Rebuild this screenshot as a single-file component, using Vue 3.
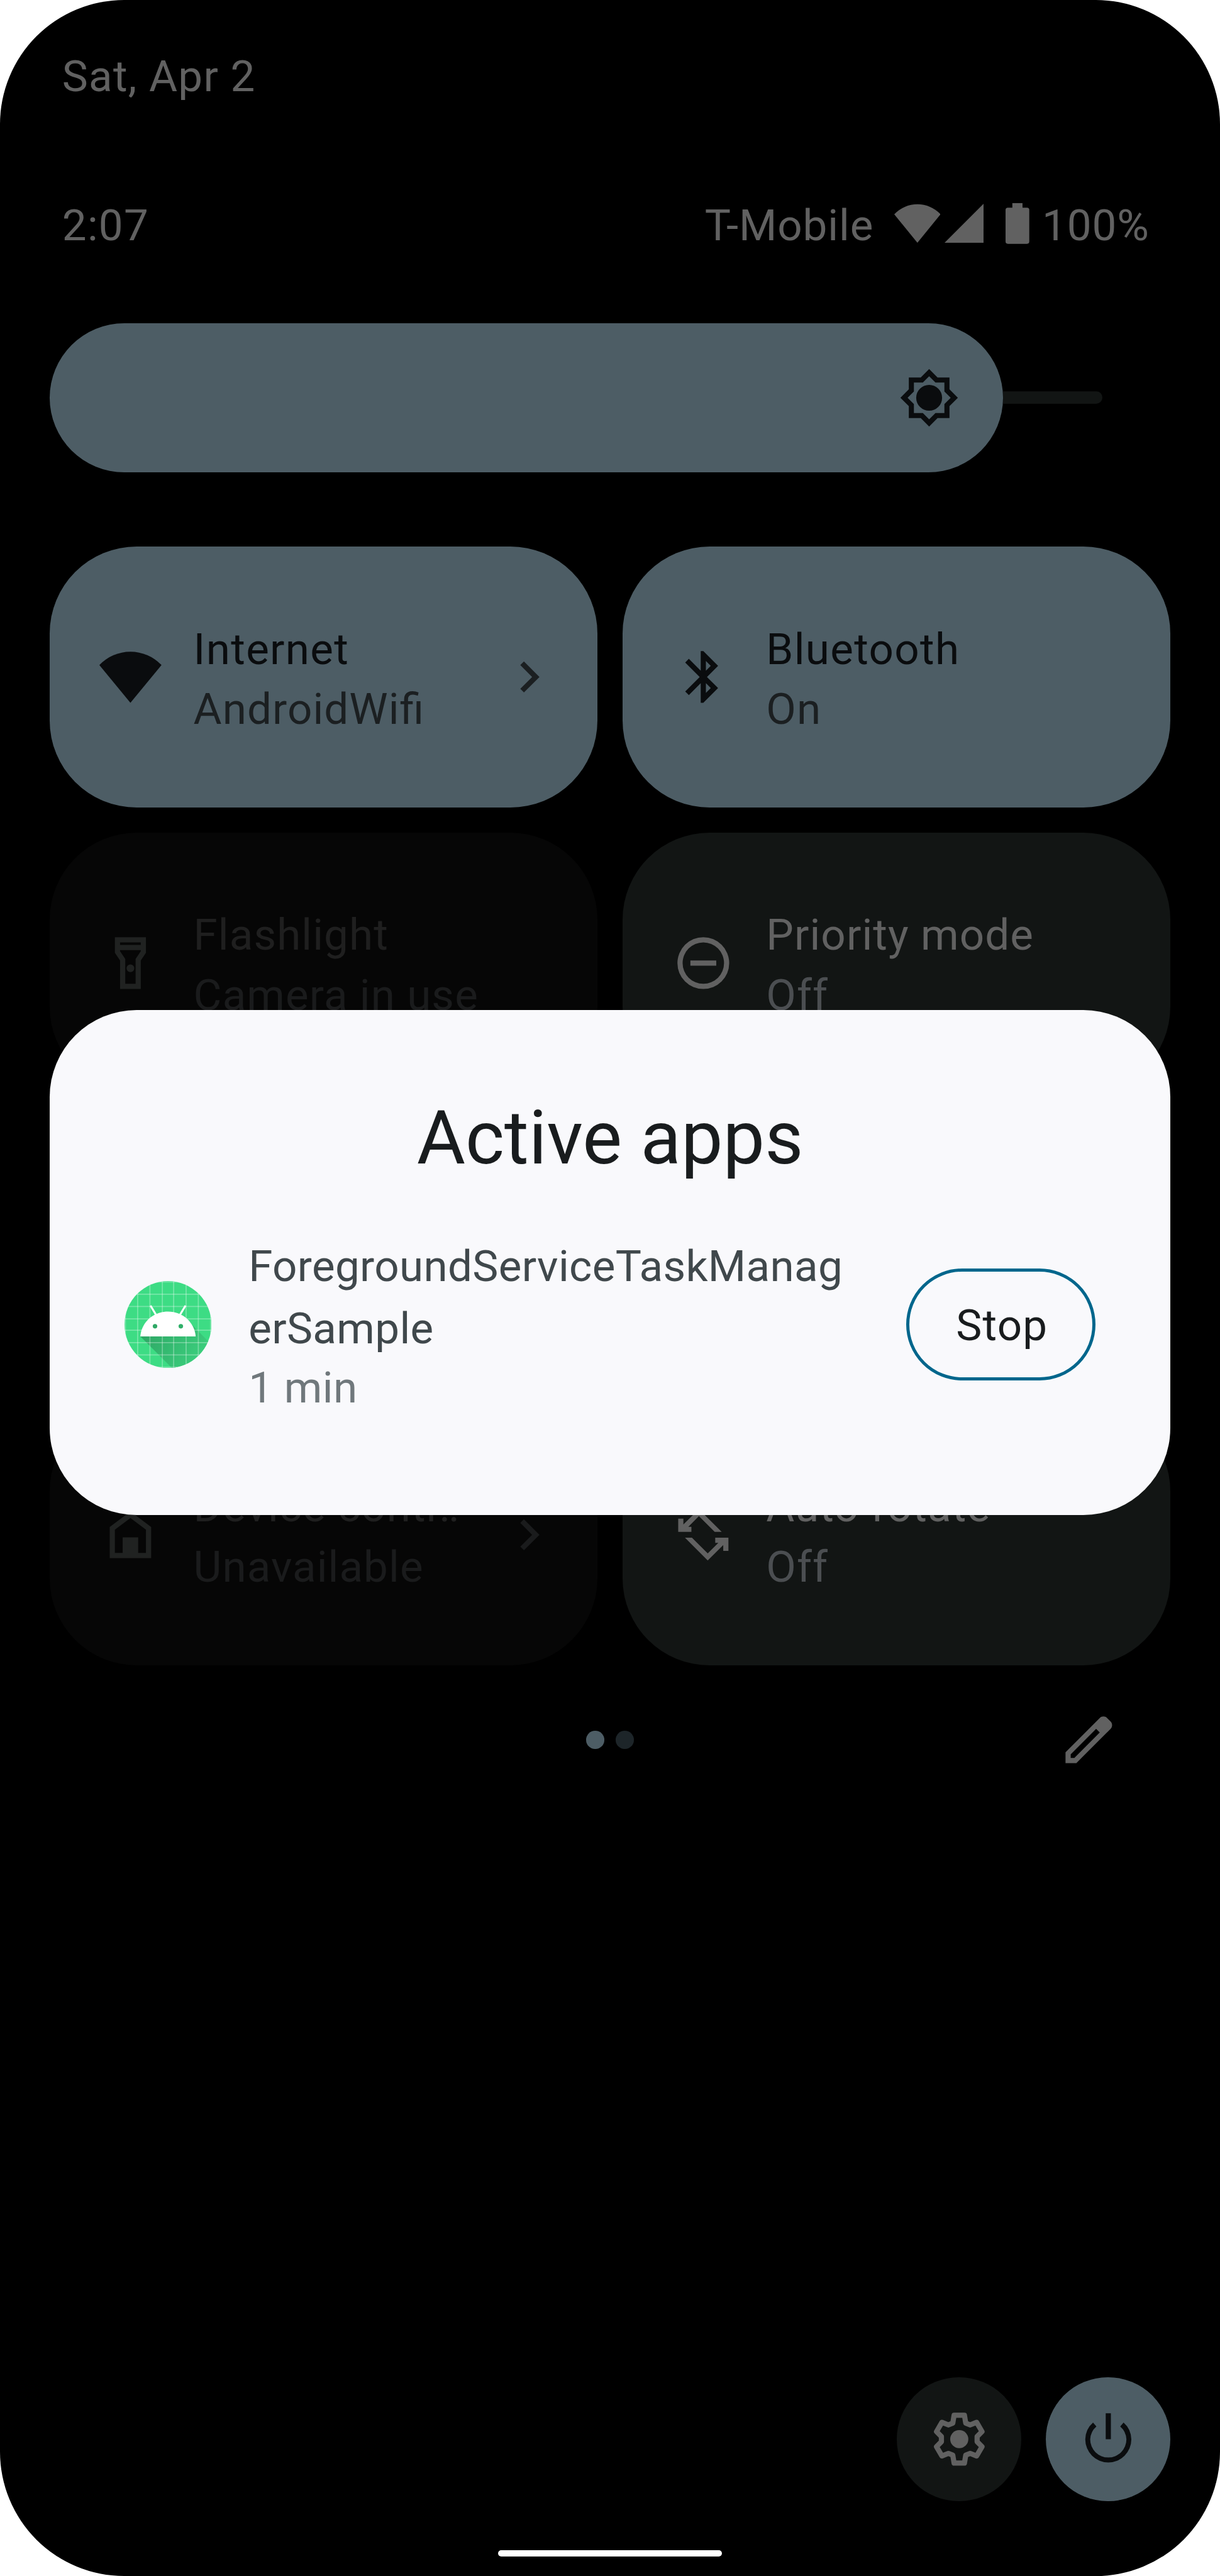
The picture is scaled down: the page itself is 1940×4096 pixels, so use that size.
<script setup>
const icons = {
  wifi: 'M12 22 24 7.4A16.6 16.6 0 0 0 0 7.4Z',
  bluetooth:
    'M17.71 7.71 12 2h-1v7.59L6.41 5 5 6.41 10.59 12 5 17.59 6.41 19 11 14.41V22h1l5.71-5.71L13.41 12l4.3-4.29ZM13 5.83l1.88 1.88L13 9.59V5.83Zm1.88 10.46L13 18.17v-3.76l1.88 1.88Z',
  flashlight:
    'M18 2H6v6l2 3v11h8V11l2-3V2Zm-2 2v1H8V4h8Zm-2 6.4V20h-4v-9.61l-2-3V7h8v.39l-2 3.01ZM13.5 14a1.5 1.5 0 1 1-3 0 1.5 1.5 0 0 1 3 0Z',
  priority:
    'M12 2a10 10 0 1 0 0 20 10 10 0 0 0 0-20Zm0 18a8 8 0 1 1 0-16 8 8 0 0 1 0 16ZM7 11h10v2H7Z',
  home: 'M12 3 4 9v12h16V9l-8-6Zm6 16h-3v-6H9v6H6v-9l6-4.5 6 4.5v9ZM9 13v6h6v-6Z',
  rotate:
    'M4.9 13.1h2.7l6.1 6.1 4.1-4.1h-1.2v-2h5.1v5.1h-2V16l-6 5.9ZM19.1 10.9h-2.7l-6.1-6.1-4.1 4.1h1.2v2H2.3V5.8h2V8l6-5.9Z',
  chevron: 'M10 6 8.59 7.41 13.17 12l-4.58 4.59L10 18l6-6Z',
  edit: 'M20.41 4.94l-1.35-1.35c-.78-.78-2.05-.78-2.83 0L3 16.82V21h4.18L20.41 7.77c.78-.78.78-2.05 0-2.83ZM6.41 19H5v-1.41l9.82-9.82 1.41 1.41Z',
  sun: 'M20 8.69V4h-4.69L12 .69 8.69 4H4v4.69L.69 12 4 15.31V20h4.69L12 23.31 15.31 20H20v-4.69L23.31 12 20 8.69ZM18 14.48V18h-3.52L12 20.48 9.52 18H6v-3.52L3.52 12 6 9.52V6h3.52L12 3.52 14.48 6H18v3.52L20.48 12 18 14.48ZM17.1 12a5.1 5.1 0 1 1-10.2 0 5.1 5.1 0 0 1 10.2 0Z',
  gear: 'M10 2.75H14L14.5 5.8 16.2 6.5 18.7 5.5 20.8 9.1 18.9 11V13L20.8 14.9 18.7 18.5 16.2 17.5 14.5 18.2 14 21.25H10L9.5 18.2 7.8 17.5 5.3 18.5 3.2 14.9 5.1 13V11L3.2 9.1 5.3 5.5 7.8 6.5 9.5 5.8Z',
  power:
    'M13 2h-2v10h2V2ZM17.9 5.6l-1.3 1.5A7 7 0 0 1 19 12.1a7 7 0 0 1-14 0A7 7 0 0 1 7.4 7.1L6.1 5.6A8.9 8.9 0 0 0 3.1 12.1a8.9 8.9 0 0 0 17.8 0A8.9 8.9 0 0 0 17.9 5.6Z',
}

const tiles = [
  { icon: 'wifi', title: 'Internet', sub: 'AndroidWifi', state: 'active', row: 1, chevron: true },
  { icon: 'bluetooth', title: 'Bluetooth', sub: 'On', state: 'active', row: 1 },
  { icon: 'flashlight', title: 'Flashlight', sub: 'Camera in use', state: 'disabled', row: 2 },
  { icon: 'priority', title: 'Priority mode', sub: 'Off', state: 'idle', row: 2 },
  { icon: 'home', title: 'Device contr‥', sub: 'Unavailable', state: 'disabled', row: 4, chevron: true },
  { icon: 'rotate', title: 'Auto-rotate', sub: 'Off', state: 'idle', row: 4 },
]

const gridLines = [1.5, 23.3, 45, 67, 87, 109, 130.7, 152.5]
</script>

<template>
  <div class="screen">
    <div class="date">Sat, Apr 2</div>

    <header class="status">
      <span class="clock">2:07</span>
      <div class="indicators">
        <span>T-Mobile</span>
        <svg class="st-wifi" viewBox="0 2 24 20" preserveAspectRatio="none"><path :d="icons.wifi" /></svg>
        <svg class="st-signal" viewBox="0 0 69 69"><path d="M69 0V69H0Z" /></svg>
        <svg class="st-battery" viewBox="0 0 42 72">
          <path d="M12 0H30V8H38Q42 8 42 12V68Q42 72 38 72H4Q0 72 0 68V12Q0 8 4 8H12Z" />
        </svg>
        <span>100%</span>
      </div>
    </header>

    <div class="brightness">
      <div class="level">
        <svg class="sun" viewBox="0 0 24 24"><path fill-rule="evenodd" :d="icons.sun" /></svg>
      </div>
      <div class="track"></div>
    </div>

    <main class="tiles">
      <section
        v-for="t in tiles"
        :key="t.title"
        class="tile"
        :class="[t.state, 'row-' + t.row]"
      >
        <svg class="icon" viewBox="0 0 24 24"><path :d="icons[t.icon]" /></svg>
        <div class="labels">
          <div class="title">{{ t.title }}</div>
          <div class="sub">{{ t.sub }}</div>
        </div>
        <svg v-if="t.chevron" class="icon chevron" viewBox="0 0 24 24"><path :d="icons.chevron" /></svg>
      </section>
    </main>

    <div class="pager">
      <span></span>
      <div class="dots"><i class="dot on"></i><i class="dot"></i></div>
      <svg class="icon edit" viewBox="0 0 24 24"><path fill-rule="evenodd" :d="icons.edit" /></svg>
    </div>

    <footer class="actions">
      <button class="round idle">
        <svg class="icon" viewBox="0 0 24 24">
          <path :d="icons.gear" fill="none" stroke="currentColor" stroke-width="2" stroke-linejoin="round" />
          <circle cx="12" cy="12" r="3.5" />
        </svg>
      </button>
      <button class="round active"><svg class="icon" viewBox="0 0 24 24"><path :d="icons.power" /></svg></button>
    </footer>
    <div class="nav-handle"></div>

    <div class="dialog">
      <h1>Active apps</h1>
      <div class="app-row">
        <svg class="app-icon" viewBox="0 0 154 154">
          <defs>
            <clipPath id="disc"><circle cx="77" cy="77" r="77" /></clipPath>
            <linearGradient id="shade" gradientUnits="userSpaceOnUse" x1="40" y1="90" x2="120" y2="150">
              <stop offset="0" stop-color="#2fa866" />
              <stop offset="1" stop-color="#3bcd7c" />
            </linearGradient>
          </defs>
          <g clip-path="url(#disc)">
            <rect width="154" height="154" fill="#3ddc84" />
            <path d="M28 98 98 168H190V149L120 78Z" fill="url(#shade)" />
            <g stroke="#fff" stroke-opacity=".3" stroke-width="2">
              <line v-for="p in gridLines" :key="'v' + p" :x1="p" y1="0" :x2="p" y2="154" />
              <line v-for="p in gridLines" :key="'h' + p" x1="0" :y1="p" x2="154" :y2="p" />
            </g>
            <path d="M28 98C30 73 51 54 77 54S124 73 126 98Z" fill="#fff" />
            <path d="M46 43.5 56 60M108 43.5 98 60" stroke="#fff" stroke-width="3.4" />
            <circle cx="54" cy="80" r="4" fill="#2fa866" />
            <circle cx="99.7" cy="80" r="4" fill="#30b069" />
          </g>
        </svg>
        <div class="app-info">
          <div class="app-name">ForegroundServiceTaskManagerSample</div>
          <div class="app-time">1 min</div>
        </div>
        <button class="stop">Stop</button>
      </div>
    </div>
  </div>
</template>

<style>
html {
  font-size: 89.8148px;
  background: #fff;
}
body {
  margin: 0;
}
</style>

<style scoped>
.screen {
  position: relative;
  box-sizing: border-box;
  display: flex;
  flex-direction: column;
  width: 1940px;
  height: 4096px;
  padding: 0.815rem 0.88rem 0;
  overflow: hidden;
  border-radius: 2.2rem;
  background: #000;
  color: #616161;
  font-family: Roboto, sans-serif;
  font-size: 0.77rem;
  line-height: 1.1rem;
  letter-spacing: 0.0179em;
  white-space: nowrap;
}
svg {
  display: block;
  flex: none;
  fill: currentColor;
}
button {
  padding: 0;
  border: 0;
  font: inherit;
  letter-spacing: inherit;
}
.icon {
  width: 1.1rem;
  height: 1.1rem;
}
.date {
  height: 1.1rem;
  padding-left: 0.22rem;
}
.status {
  display: flex;
  justify-content: space-between;
  height: 1.1rem;
  margin-top: 1.532rem;
  padding: 0 0.37rem 0 0.22rem;
}
.indicators {
  display: flex;
  align-items: flex-start;
  letter-spacing: 0.013em;
}
.st-wifi {
  width: 0.82rem;
  height: 0.69rem;
  margin: 0.16rem 0.07rem 0 0.36rem;
}
.st-signal {
  width: 0.69rem;
  height: 0.69rem;
  margin: 0.16rem 0.4rem 0 0;
}
.st-battery {
  width: 0.42rem;
  height: 0.72rem;
  margin: 0.155rem 0.22rem 0 0;
}
.brightness {
  display: flex;
  align-items: center;
  height: 2.64rem;
  margin-top: 1.173rem;
}
.level {
  display: flex;
  align-items: center;
  justify-content: flex-end;
  box-sizing: border-box;
  width: 16.88rem;
  height: 2.64rem;
  padding-right: 0.77rem;
  border-radius: 1.32rem;
  background: #4d5d65;
  color: #0a0c0e;
}
.sun {
  width: 1.08rem;
  height: 1.08rem;
}
.track {
  width: 1.87rem;
  height: 0.22rem;
  margin-left: -0.11rem;
  border-radius: 0.11rem;
  background: #121514;
  clip-path: inset(0 0 0 0.11rem);
}
.tiles {
  display: grid;
  grid-template: repeat(4, 4.62rem) / repeat(2, 9.7rem);
  gap: 0.44rem;
  margin-top: 1.32rem;
}
.tile {
  display: flex;
  align-items: center;
  box-sizing: border-box;
  padding: 0 0.66rem 0 0.88rem;
  border-radius: 1.54rem;
}
.row-1 { grid-row: 1; }
.row-2 { grid-row: 2; }
.row-4 { grid-row: 4; }
.labels {
  flex: 1;
  padding: 0.075rem 0 0 0.565rem;
  line-height: 1.06rem;
  letter-spacing: 0.0155em;
  font-feature-settings: 'liga' 1;
}
.active {
  background: #4d5d65;
  color: #0a0c0e;
}
.active .title { letter-spacing: 0.019em; }
.active .sub,
.active .chevron { color: #1b1f21; }
.idle {
  background: #121514;
  color: #616161;
}
.idle .sub { color: #4b4e51; }
.disabled {
  background: #060606;
  color: #202221;
}
.disabled .title { color: #1f1f1f; }
.disabled .sub,
.disabled .chevron { color: #1a1b1c; }
.pager {
  display: grid;
  grid-template-columns: 1fr auto 1fr;
  align-items: center;
  height: 1.1rem;
  margin-top: 0.77rem;
}
.dots {
  display: flex;
  gap: 0.2rem;
}
.dot {
  width: 0.32rem;
  height: 0.32rem;
  border-radius: 50%;
  background: #1d2529;
}
.dot.on { background: #4d5d65; }
.edit {
  justify-self: end;
  margin-right: 0.89rem;
}
.actions {
  display: flex;
  justify-content: flex-end;
  gap: 0.44rem;
  margin-top: auto;
}
.round {
  display: flex;
  align-items: center;
  justify-content: center;
  width: 2.2rem;
  height: 2.2rem;
  border-radius: 50%;
}
.nav-handle {
  align-self: center;
  width: 3.96rem;
  height: 0.11rem;
  margin: 0.86rem 0 0.35rem;
  border-radius: 0.06rem;
  background: #fff;
}
.dialog {
  position: absolute;
  top: 17.88rem;
  left: 0.88rem;
  box-sizing: border-box;
  width: 19.84rem;
  height: 8.94rem;
  padding: 1.49rem 1.32rem 0;
  border-radius: 1.54rem;
  background: #f9f9fc;
}
h1 {
  margin: 0;
  color: #191c1e;
  font-size: 1.32rem;
  font-weight: 400;
  line-height: 1.56rem;
  letter-spacing: 0;
  text-align: center;
}
.app-row {
  display: flex;
  align-items: center;
  height: 3.3rem;
  margin-top: 0.87rem;
}
.app-icon {
  width: 1.54rem;
  height: 1.54rem;
}
.app-info {
  width: 10.75rem;
  margin: 0.05rem auto 0 0.66rem;
  color: #40484c;
  letter-spacing: 0.005em;
}
.app-name {
  white-space: normal;
  word-break: break-all;
}
.app-time {
  color: #70787c;
  line-height: 0.99rem;
}
.stop {
  box-sizing: border-box;
  width: 3.36rem;
  height: 1.99rem;
  padding: 0.05rem 0 0 0.04rem;
  border: 5px solid #00668c;
  border-radius: 1rem;
  background: none;
  color: #191c1e;
}
</style>
